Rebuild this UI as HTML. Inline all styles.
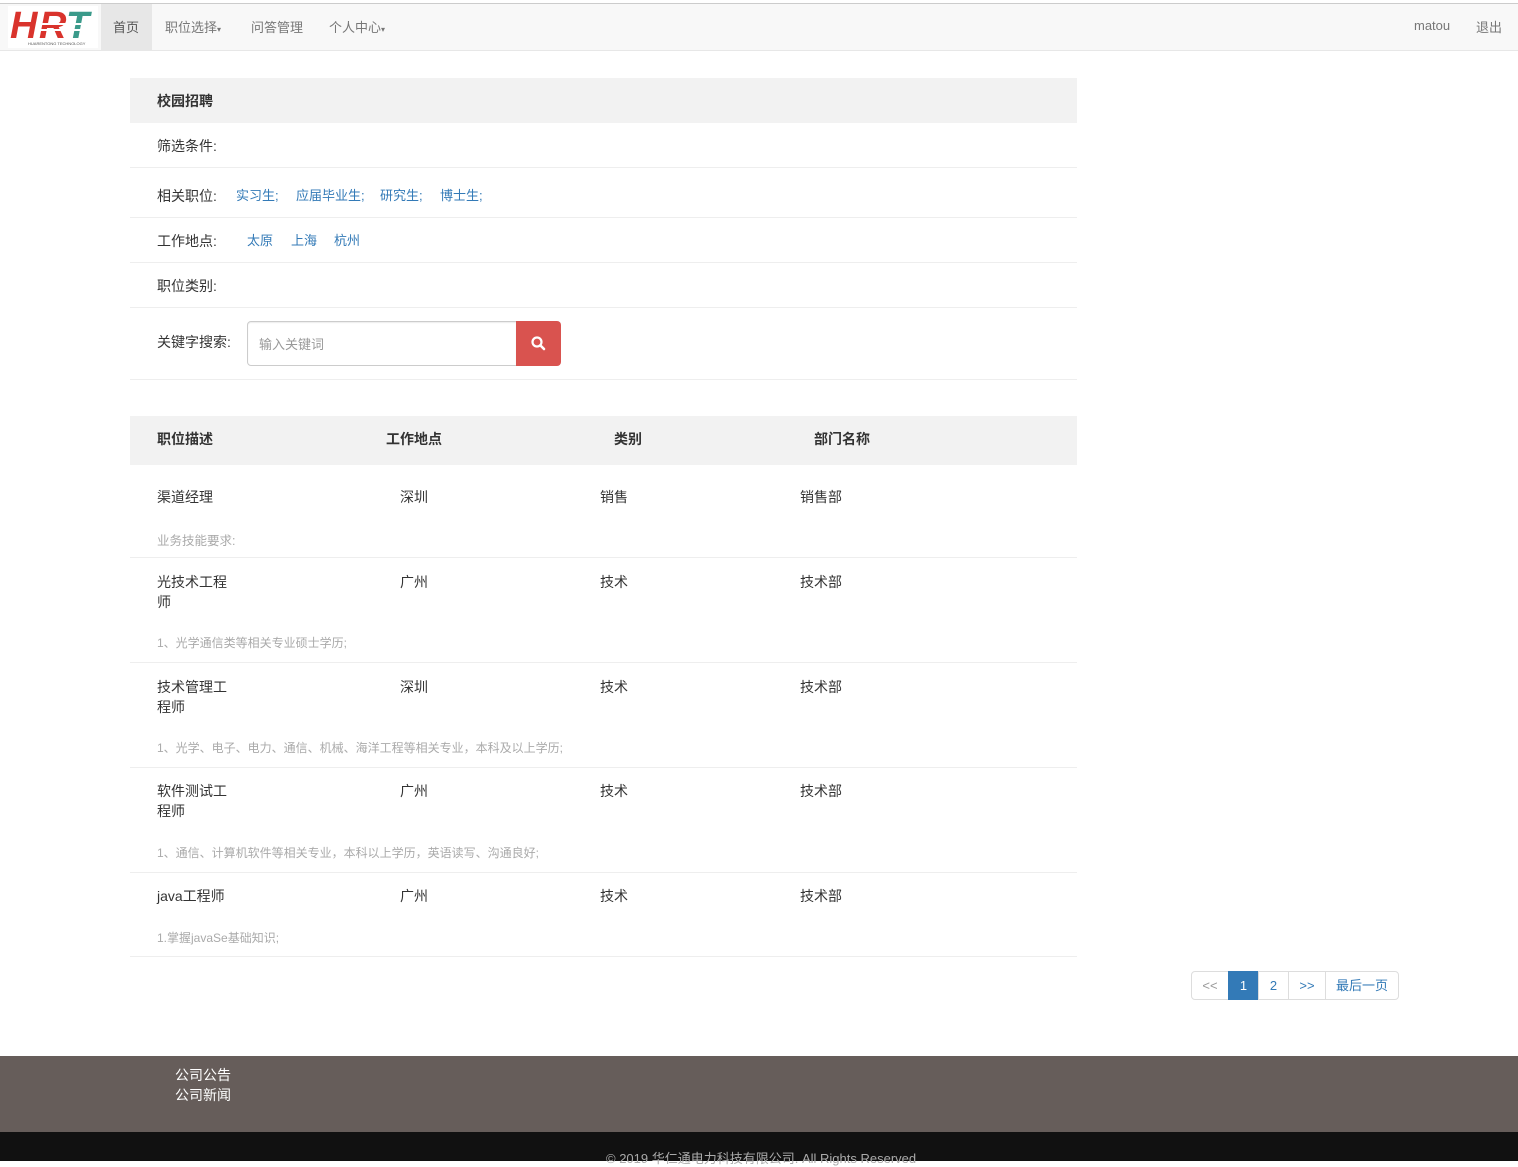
<!DOCTYPE html>
<html><head><meta charset="utf-8"><style>
*{margin:0;padding:0;box-sizing:border-box}
body{width:1518px;height:1161px;position:relative;background:#fff;font-family:"Liberation Sans","Noto Sans CJK SC",sans-serif;font-size:14px;color:#333;overflow:hidden}
.a{position:absolute;white-space:nowrap}
.l{color:#337ab7;font-size:13px}
.g{color:#aaa;font-size:12px}
.hr{position:absolute;left:130px;width:947px;height:1px;background:#eee}
.b{font-weight:bold}
</style></head><body>
<div class="a" style="left:0;top:3px;width:1518px;height:48px;background:#f8f8f8;border-top:1px solid #ccc;border-bottom:1px solid #e7e7e7"></div>
<div class="a" style="left:8px;top:6px;width:90px;height:42px;background:#fff">
<svg width="90" height="42"><text x="2" y="32" font-family="Liberation Sans" font-weight="bold" font-style="italic" font-size="38" fill="#d9332c">H</text><text x="31" y="32" font-family="Liberation Sans" font-weight="bold" font-style="italic" font-size="38" fill="#d9332c">R</text><text x="58" y="32" font-family="Liberation Sans" font-weight="bold" font-style="italic" font-size="38" fill="#3a9a8a">T</text><rect x="30" y="17" width="58" height="2" fill="#fff"/><rect x="30" y="23" width="58" height="2" fill="#fff"/><text x="20" y="39" font-size="4" fill="#555">HUARENTONG TECHNOLOGY</text></svg></div>
<div class="a" style="left:101px;top:4px;width:51px;height:46px;background:#e7e7e7"></div>
<div class="a" style="left:113px;top:17px;color:#555;font-size:13px">首页</div>
<div class="a" style="left:165px;top:17px;color:#777;font-size:13px">职位选择<span style="font-size:8px">▾</span></div>
<div class="a" style="left:251px;top:17px;color:#777;font-size:13px">问答管理</div>
<div class="a" style="left:329px;top:17px;color:#777;font-size:13px">个人中心<span style="font-size:8px">▾</span></div>
<div class="a" style="left:1414px;top:18px;color:#777;font-size:13px">matou</div>
<div class="a" style="left:1476px;top:17px;color:#777;font-size:13px">退出</div>

<div class="a" style="left:130px;top:78px;width:947px;height:45px;background:#f2f2f2"></div>
<div class="a b" style="left:157px;top:91px">校园招聘</div>
<div class="a" style="left:157px;top:136px">筛选条件:</div>
<div class="hr" style="top:167px"></div>
<div class="a" style="left:157px;top:186px">相关职位:</div>
<div class="a l" style="left:236px;top:185px">实习生;</div>
<div class="a l" style="left:296px;top:185px">应届毕业生;</div>
<div class="a l" style="left:380px;top:185px">研究生;</div>
<div class="a l" style="left:440px;top:185px">博士生;</div>
<div class="hr" style="top:217px"></div>
<div class="a" style="left:157px;top:231px">工作地点:</div>
<div class="a l" style="left:247px;top:230px">太原</div>
<div class="a l" style="left:291px;top:230px">上海</div>
<div class="a l" style="left:334px;top:230px">杭州</div>
<div class="hr" style="top:262px"></div>
<div class="a" style="left:157px;top:276px">职位类别:</div>
<div class="hr" style="top:307px"></div>
<div class="a" style="left:157px;top:332px">关键字搜索:</div>
<div class="a" style="left:247px;top:321px;width:270px;height:45px;border:1px solid #ccc;border-radius:4px 0 0 4px;box-shadow:inset 0 1px 1px rgba(0,0,0,.075)"></div>
<div class="a" style="left:259px;top:334px;color:#999;font-size:13px">输入关键词</div>
<div class="a" style="left:516px;top:321px;width:45px;height:45px;background:#d9534f;border-radius:0 4px 4px 0">
<svg width="45" height="45"><circle cx="21" cy="21" r="4.5" stroke="#fff" stroke-width="2.2" fill="none"/><line x1="24.5" y1="24.5" x2="28" y2="28" stroke="#fff" stroke-width="2.6" stroke-linecap="round"/></svg></div>
<div class="hr" style="top:379px"></div>

<div class="a" style="left:130px;top:416px;width:947px;height:49px;background:#f2f2f2"></div>
<div class="a b" style="left:157px;top:429px">职位描述</div>
<div class="a b" style="left:386px;top:429px">工作地点</div>
<div class="a b" style="left:614px;top:429px">类别</div>
<div class="a b" style="left:814px;top:429px">部门名称</div>

<div class="a" style="left:157px;top:487px">渠道经理</div><div class="a" style="left:400px;top:487px">深圳</div><div class="a" style="left:600px;top:487px">销售</div><div class="a" style="left:800px;top:487px">销售部</div>
<div class="a g" style="left:157px;top:530px;font-size:12.5px">业务技能要求:</div>
<div class="hr" style="top:557px"></div>
<div class="a" style="left:157px;top:572px;line-height:20px">光技术工程<br>师</div><div class="a" style="left:400px;top:572px">广州</div><div class="a" style="left:600px;top:572px">技术</div><div class="a" style="left:800px;top:572px">技术部</div>
<div class="a g" style="left:157px;top:634px">1、光学通信类等相关专业硕士学历;</div>
<div class="hr" style="top:662px"></div>
<div class="a" style="left:157px;top:677px;line-height:20px">技术管理工<br>程师</div><div class="a" style="left:400px;top:677px">深圳</div><div class="a" style="left:600px;top:677px">技术</div><div class="a" style="left:800px;top:677px">技术部</div>
<div class="a g" style="left:157px;top:739px">1、光学、电子、电力、通信、机械、海洋工程等相关专业，本科及以上学历;</div>
<div class="hr" style="top:767px"></div>
<div class="a" style="left:157px;top:781px;line-height:20px">软件测试工<br>程师</div><div class="a" style="left:400px;top:781px">广州</div><div class="a" style="left:600px;top:781px">技术</div><div class="a" style="left:800px;top:781px">技术部</div>
<div class="a g" style="left:157px;top:844px">1、通信、计算机软件等相关专业，本科以上学历，英语读写、沟通良好;</div>
<div class="hr" style="top:872px"></div>
<div class="a" style="left:157px;top:886px">java工程师</div><div class="a" style="left:400px;top:886px">广州</div><div class="a" style="left:600px;top:886px">技术</div><div class="a" style="left:800px;top:886px">技术部</div>
<div class="a g" style="left:157px;top:929px">1.掌握javaSe基础知识;</div>
<div class="hr" style="top:956px"></div>

<div class="a" style="left:1191px;top:971px;height:29px;display:flex;font-size:13px">
<div style="width:38px;border:1px solid #ddd;border-radius:4px 0 0 4px;color:#999;text-align:center;line-height:27px">&lt;&lt;</div>
<div style="width:31px;background:#337ab7;border:1px solid #337ab7;color:#fff;text-align:center;line-height:27px;margin-left:-1px">1</div>
<div style="width:31px;border:1px solid #ddd;color:#337ab7;text-align:center;line-height:27px;margin-left:-1px">2</div>
<div style="width:38px;border:1px solid #ddd;color:#337ab7;text-align:center;line-height:27px;margin-left:-1px">&gt;&gt;</div>
<div style="width:74px;border:1px solid #ddd;border-radius:0 4px 4px 0;color:#337ab7;text-align:center;line-height:27px;margin-left:-1px">最后一页</div>
</div>

<div class="a" style="left:0;top:1056px;width:1518px;height:76px;background:#665d5a"></div>
<div class="a" style="left:175px;top:1065px;color:#fff;font-size:14px;line-height:20px">公司公告<br>公司新闻</div>
<div class="a" style="left:0;top:1132px;width:1518px;height:29px;background:#111"></div>
<div class="a" style="left:606px;top:1148px;color:#aaa;font-size:13px">© 2019 华仁通电力科技有限公司. All Rights Reserved</div>
</body></html>
